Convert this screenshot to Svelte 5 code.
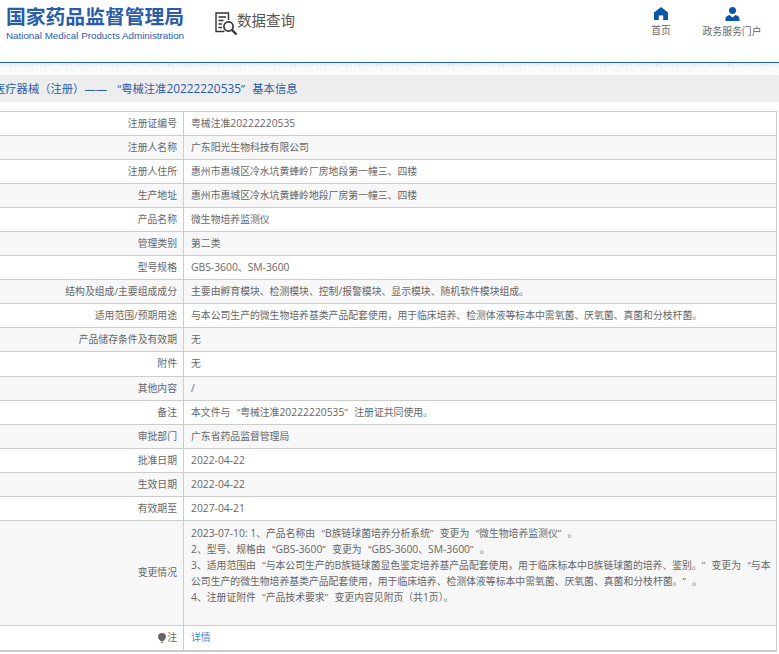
<script>
  const rows = [
    ['注册证编号', '粤械注准20222220535'],
    ['注册人名称', '广东阳光生物科技有限公司'],
    ['注册人住所', '惠州市惠城区冷水坑黄蜂岭厂房地段第一幢三、四楼'],
    ['生产地址', '惠州市惠城区冷水坑黄蜂岭地段厂房第一幢三、四楼'],
    ['产品名称', '微生物培养监测仪'],
    ['管理类别', '第二类'],
    ['型号规格', 'GBS-3600、SM-3600'],
    ['结构及组成/主要组成成分', '主要由孵育模块、检测模块、控制/报警模块、显示模块、随机软件模块组成。'],
    ['适用范围/预期用途', '与本公司生产的微生物培养基类产品配套使用，用于临床培养、检测体液等标本中需氧菌、厌氧菌、真菌和分枝杆菌。'],
    ['产品储存条件及有效期', '无'],
    ['附件', '无'],
    ['其他内容', '/'],
    ['备注', '本文件与“粤械注准20222220535”注册证共同使用。'],
    ['审批部门', '广东省药品监督管理局'],
    ['批准日期', '2022-04-22'],
    ['生效日期', '2022-04-22'],
    ['有效期至', '2027-04-21']
  ];
  const changes = [
    '2023-07-10: 1、产品名称由“B族链球菌培养分析系统”变更为“微生物培养监测仪”。',
    '2、型号、规格由“GBS-3600”变更为“GBS-3600、SM-3600”。',
    '3、适用范围由“与本公司生产的B族链球菌显色鉴定培养基产品配套使用，用于临床标本中B族链球菌的培养、鉴别。”变更为“与本公司生产的微生物培养基类产品配套使用，用于临床培养、检测体液等标本中需氧菌、厌氧菌、真菌和分枝杆菌。”。',
    '4、注册证附件“产品技术要求”变更内容见附页（共1页）。'
  ];
  // Quotes take a full-width cell and Latin runs sit slightly larger, as in the original's faces.
  const parts = (s) => s.split(/([“”]|[A-Za-z0-9:\-\/ ]+)/).filter(Boolean);
  const isLatin = (p) => /^[A-Za-z0-9:\-\/ ]+$/.test(p);
</script>

{#snippet quoted(text)}
  {#each parts(text) as p}{#if p === '“'}<span class="q open">{p}</span>{:else if p === '”'}<span class="q close">{p}</span>{:else if isLatin(p)}<span class="lat">{p}</span>{:else}{p}{/if}{/each}
{/snippet}

<div class="page">
  <header class="top">
    <div class="logo">
      <div class="cn">国家药品监督管理局</div>
      <div class="en">National Medical Products Administration</div>
    </div>
    <div class="query">
      <svg width="24" height="24" viewBox="0 0 24 24" fill="none" stroke="#333" stroke-width="1.4">
        <path d="M9.5 19.5H1V1H13.5V8" />
        <path d="M3.5 5H11M3.5 8.5H8.5M3.5 12H7M3.5 15.5H7" />
        <circle cx="13.5" cy="14.5" r="4.6" stroke-width="1.7" />
        <path d="M17 18L21.5 22.5" stroke-width="2.4" />
      </svg>
      <span>数据查询</span>
    </div>
    <nav class="nav">
      <div class="nav-item home">
        <svg width="14" height="13" viewBox="0 0 14 13" fill="#0c56a8"><path d="M7 0L14 5.6V13H9.2V8.6H4.8V13H0V5.6Z" /></svg>
        <span>首页</span>
      </div>
      <div class="nav-item portal">
        <svg width="15" height="14" viewBox="0 0 15 14" fill="#0c56a8"><circle cx="7.5" cy="3.6" r="3.5" /><path d="M0.5 14V11.5C0.5 9.5 2.5 8.2 4.6 7.9L7.5 10.6L10.4 7.9C12.5 8.2 14.5 9.5 14.5 11.5V14Z" /></svg>
        <span>政务服务门户</span>
      </div>
    </nav>
  </header>

  <div class="hatch"></div>

  <div class="crumb">
    <span class="crumb-text">医疗器械（注册）—— {@render quoted('“粤械注准20222220535”基本信息')}</span>
  </div>

  <div class="table-wrap">
    <div class="table">
      {#each rows as r, i}
        <div class="row" class:alt={i % 2 === 1}>
          <div class="label">{r[0]}</div>
          <div class="value">{@render quoted(r[1])}</div>
        </div>
      {/each}
      <div class="row alt tall">
        <div class="label">变更情况</div>
        <div class="value multi">
          {#each changes as c}
            <div>{@render quoted(c)}</div>
          {/each}
        </div>
      </div>
      <div class="row last">
        <div class="label">
          <svg class="bulb" width="8" height="10" viewBox="0 0 8 10" fill="#666"><path d="M4 0A4 4 0 0 1 8 4C8 5.8 6.4 6.5 5.6 8H2.4C1.6 6.5 0 5.8 0 4A4 4 0 0 1 4 0Z" /><rect x="2.8" y="8.6" width="2.4" height="1.2" /></svg>注
        </div>
        <div class="value"><span class="link">详情</span></div>
      </div>
    </div>
  </div>
</div>

<style>
  :global(body) {
    margin: 0;
    background: #fff;
  }
  .page {
    width: 779px;
    height: 654px;
    overflow: hidden;
    font-family: "Open Sans", "Noto Sans CJK SC", sans-serif;
    color: #666;
    font-size: 9.84px;
  }
  .q {
    display: inline-block;
    width: 1em;
    line-height: 1;
  }
  .lat {
    font-size: 1.05em;
  }
  .open {
    text-align: right;
  }
  .close {
    text-align: left;
  }
  .top {
    height: 62px;
    border-bottom: 1px solid #1f5ea8;
    display: flex;
  }
  .logo {
    width: 215px;
    padding: 4px 0 0 6px;
    box-sizing: border-box;
    flex: none;
  }
  .cn {
    font-family: "Noto Sans CJK SC", sans-serif;
    font-size: 19.8px;
    line-height: 24px;
    font-weight: 700;
    color: #2a5caa;
    white-space: nowrap;
  }
  .en {
    font-family: "Liberation Sans", sans-serif;
    font-size: 9.8px;
    line-height: 12px;
    color: #2a5caa;
    white-space: nowrap;
    margin-top: 2px;
  }
  .query {
    display: flex;
    align-items: flex-start;
    padding-top: 9px;
    flex: none;
    width: 410px;
    box-sizing: border-box;
  }
  .query svg {
    margin-top: 3px;
    margin-right: -2px;
  }
  .query span {
    font-size: 14.5px;
    line-height: 22px;
    color: #555;
    font-family: "Noto Sans CJK SC", sans-serif;
  }
  .nav {
    display: flex;
    flex: 1;
  }
  .nav-item {
    display: flex;
    flex-direction: column;
    align-items: center;
    padding-top: 7px;
    gap: 4px;
    color: #666;
    line-height: 12px;
  }
  .home {
    margin-left: 16px;
    width: 40px;
  }
  .portal {
    margin-left: 21px;
    width: 60px;
  }
  .hatch {
    height: 12px;
    background:
      repeating-linear-gradient(135deg, rgba(90,160,190,0.16) 0 1px, transparent 1px 3px) top / 100% 3px no-repeat,
      linear-gradient(#f5f5f5, #fcfcfc);
  }
  .crumb {
    height: 27px;
    background: #ededed;
    line-height: 27px;
    font-size: 11.3px;
    color: #2a5caa;
    white-space: nowrap;
    overflow: hidden;
  }
  .crumb-text {
    display: block;
    margin-left: -6px;
  }
  .table-wrap {
    padding-top: 9px;
  }
  .table {
    width: 776px;
    border-top: 1px solid #ccc;
    border-right: 1px solid #ccc;
    border-bottom: 2px solid #ccc;
  }
  .row {
    display: grid;
    grid-template-columns: 184px 1fr;
    height: 24.06px;
    box-sizing: border-box;
    border-bottom: 1px solid #ccc;
    line-height: 23px;
  }
  .last {
    border-bottom: 0;
  }
  .alt {
    background: #f7f7f7;
  }
  .label {
    padding-right: 6px;
    border-right: 1px solid #ccc;
    display: flex;
    align-items: center;
    justify-content: flex-end;
    white-space: nowrap;
  }
  .value {
    padding-left: 7px;
    white-space: nowrap;
  }
  .tall {
    height: 105px;
  }
  .multi {
    white-space: normal;
    line-height: 16px;
    padding: 4px 4px 0 7px;
  }
  .bulb {
    margin-right: 1px;
  }
  .link {
    color: #3d8bdc;
  }
</style>
